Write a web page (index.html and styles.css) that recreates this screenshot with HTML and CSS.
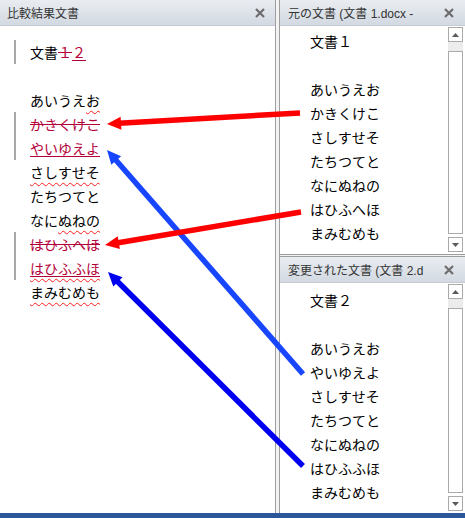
FILE: index.html
```html
<!DOCTYPE html>
<html lang="ja">
<head>
<meta charset="utf-8">
<title>比較結果文書</title>
<link rel="stylesheet" href="styles.css">
</head>
<body>
<div class="app">
  <section class="pane pane-main">
    <header class="pane-head">
      <span class="title">比較結果文書</span>
      <svg class="close" width="10" height="10" viewBox="0 0 10 10"><path d="M1 1 L9 9 M9 1 L1 9" /></svg>
    </header>
    <div class="doc doc-main">
      <p class="ln bar">文書<del>１</del><ins>２</ins></p>
      <p class="ln"></p>
      <p class="ln">あいうえ<span class="sp">お</span></p>
      <p class="ln bar"><del>かきくけこ</del></p>
      <p class="ln bar"><ins>やいゆえよ</ins></p>
      <p class="ln"><span class="sp">さしすせそ</span></p>
      <p class="ln">たちつてと</p>
      <p class="ln">なに<span class="sp">ぬねの</span></p>
      <p class="ln bar"><del>はひふへほ</del></p>
      <p class="ln bar"><span class="sp"><ins>はひふふほ</ins></span></p>
      <p class="ln"><span class="sp">まみむめも</span></p>
    </div>
  </section>
  <div class="vsep"></div>
  <div class="side">
    <section class="pane pane-top">
      <header class="pane-head">
        <span class="title">元の文書 (文書 1.docx -</span>
        <svg class="close" width="10" height="10" viewBox="0 0 10 10"><path d="M1 1 L9 9 M9 1 L1 9" /></svg>
      </header>
      <div class="pane-body">
        <div class="doc doc-side doc-top">
          <p class="ln">文書１</p>
          <p class="ln"></p>
          <p class="ln">あいうえお</p>
          <p class="ln">かきくけこ</p>
          <p class="ln">さしすせそ</p>
          <p class="ln">たちつてと</p>
          <p class="ln">なにぬねの</p>
          <p class="ln">はひふへほ</p>
          <p class="ln">まみむめも</p>
        </div>
        <div class="scroll">
          <div class="sb-btn"><svg width="7" height="4" viewBox="0 0 7 4"><path d="M0 4 L3.5 0 L7 4 Z"/></svg></div>
          <div class="sb-gap"></div>
          <div class="sb-thumb"></div>
          <div class="sb-gap2"></div>
          <div class="sb-btn"><svg width="7" height="4" viewBox="0 0 7 4"><path d="M0 0 L7 0 L3.5 4 Z"/></svg></div>
        </div>
      </div>
    </section>
    <div class="hsep"></div>
    <section class="pane pane-bottom">
      <header class="pane-head">
        <span class="title">変更された文書 (文書 2.d</span>
        <svg class="close" width="10" height="10" viewBox="0 0 10 10"><path d="M1 1 L9 9 M9 1 L1 9" /></svg>
      </header>
      <div class="pane-body">
        <div class="doc doc-side doc-bottom">
          <p class="ln">文書２</p>
          <p class="ln"></p>
          <p class="ln">あいうえお</p>
          <p class="ln">やいゆえよ</p>
          <p class="ln">さしすせそ</p>
          <p class="ln">たちつてと</p>
          <p class="ln">なにぬねの</p>
          <p class="ln">はひふふほ</p>
          <p class="ln">まみむめも</p>
        </div>
        <div class="scroll">
          <div class="sb-btn"><svg width="7" height="4" viewBox="0 0 7 4"><path d="M0 4 L3.5 0 L7 4 Z"/></svg></div>
          <div class="sb-gap"></div>
          <div class="sb-thumb"></div>
          <div class="sb-gap2"></div>
          <div class="sb-btn"><svg width="7" height="4" viewBox="0 0 7 4"><path d="M0 0 L7 0 L3.5 4 Z"/></svg></div>
        </div>
      </div>
    </section>
  </div>
</div>
<div class="status"></div>
<svg class="arrows" width="465" height="518" viewBox="0 0 465 518">
  <g class="arrow red">
    <line x1="300" y1="113" x2="119" y2="123.3"/>
    <polygon points="107,124 121.4,129.7 120.6,116.7"/>
  </g>
  <g class="arrow blue1">
    <line x1="303" y1="374" x2="114.9" y2="159"/>
    <polygon points="107,150 121.1,156.3 111.3,164.8"/>
  </g>
  <g class="arrow red">
    <line x1="301" y1="212" x2="116.8" y2="243"/>
    <polygon points="105,245 119.9,249.1 117.7,236.3"/>
  </g>
  <g class="arrow blue2">
    <line x1="303" y1="466" x2="116.5" y2="280.5"/>
    <polygon points="108,272 122.5,277.3 113.3,286.5"/>
  </g>
</svg>
</body>
</html>
```
FILE: styles.css
```css
* { box-sizing: border-box; }

body {
  margin: 0;
  width: 465px;
  height: 518px;
  overflow: hidden;
  background: #fff;
  font-family: "Noto Sans CJK JP", "Noto Sans", sans-serif;
  position: relative;
}

.app {
  display: flex;
  height: 513px;
}

.pane {
  display: flex;
  flex-direction: column;
  background: #fff;
  min-height: 0;
}

.pane-main { width: 275px; }

.vsep {
  width: 5px;
  border-left: 1px solid #9d9d9d;
  border-right: 1px solid #9d9d9d;
  background: #f3f3f3;
}

.side {
  width: 185px;
  display: flex;
  flex-direction: column;
}

.pane-top { height: 254px; }

.hsep {
  height: 3px;
  border-top: 1px solid #9d9d9d;
  border-bottom: 1px solid #9d9d9d;
  background: #f3f3f3;
}

.pane-bottom { flex: 1; }

.pane-head {
  height: 26px;
  flex: none;
  display: flex;
  align-items: center;
  justify-content: space-between;
  padding: 0 10px 0 7px;
  background: linear-gradient(#e9edf2, #d3d9e1);
  border-bottom: 1px solid #c4cad3;
  font-family: "Liberation Sans", "Noto Sans CJK JP", sans-serif;
  font-size: 12px;
  color: #333;
  white-space: nowrap;
  overflow: hidden;
}

.side .pane-head { padding: 0 11px 0 8px; }

.close {
  flex: none;
}
.close path {
  stroke: #6d6d6d;
  stroke-width: 2.2;
  fill: none;
}

.pane-body {
  flex: 1;
  display: flex;
  min-height: 0;
}

.doc { flex: 1; }

.doc-main { padding-top: 14px; }
.doc-side { padding-left: 30px; }
.doc-top { padding-top: 3px; }
.doc-bottom { padding-top: 5px; }

.ln {
  margin: 0;
  height: 24px;
  line-height: 24px;
  font-size: 14px;
  white-space: nowrap;
  color: #000;
}

.doc-main .ln { padding-left: 30px; }

.bar {
  background: linear-gradient(#a8a8a8, #a8a8a8) no-repeat 14px 0 / 2px 100%;
}

del {
  color: #b3003a;
  text-decoration: line-through #b3003a 1px;
}

ins {
  color: #b3003a;
  text-decoration: underline #b3003a 1px;
  text-underline-offset: 2px;
}

.sp {
  text-decoration: underline wavy #ff2020 1px;
  text-underline-offset: 4px;
}

.scroll {
  width: 15px;
  flex: none;
  margin: 1px 2px 2px 0;
  display: flex;
  flex-direction: column;
}

.sb-btn {
  height: 15px;
  flex: none;
  border: 1px solid #aaaaaa;
  background: #fff;
  display: flex;
  align-items: center;
  justify-content: center;
}
.sb-btn path { fill: #5a5a5a; }

.sb-gap {
  height: 9px;
  flex: none;
  background: #ececec;
}

.sb-thumb {
  flex: 1;
  border: 1px solid #aaaaaa;
  background: #fff;
}

.sb-gap2 {
  height: 3px;
  flex: none;
}

.status {
  height: 5px;
  background: #2b579a;
}

.arrows {
  position: absolute;
  top: 0;
  left: 0;
  pointer-events: none;
}

.arrow line { stroke-width: 5.5; }
.red line { stroke: #ff0000; }
.red polygon { fill: #ff0000; }
.blue1 line { stroke: #1846ff; }
.blue1 polygon { fill: #1846ff; }
.blue2 line { stroke: #0000f0; }
.blue2 polygon { fill: #0000f0; }
```
